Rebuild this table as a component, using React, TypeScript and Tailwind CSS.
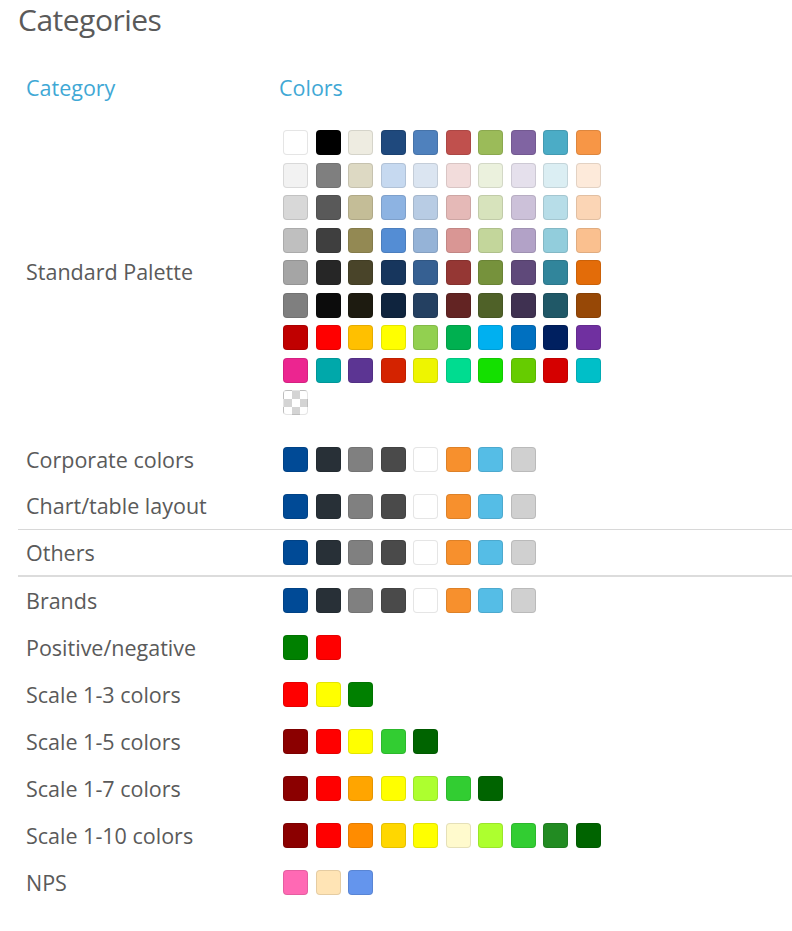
const palette: string[][] = [
  ["#ffffff", "#000000", "#eeece1", "#1f497d", "#4f81bd", "#c0504d", "#9bbb59", "#8064a2", "#4bacc6", "#f79646"],
  ["#f2f2f2", "#7f7f7f", "#ddd9c3", "#c6d9f0", "#dbe5f1", "#f2dcdb", "#ebf1dd", "#e5e0ec", "#dbeef3", "#fdeada"],
  ["#d8d8d8", "#595959", "#c4bd97", "#8db3e2", "#b8cce4", "#e5b9b7", "#d7e3bc", "#ccc1d9", "#b7dde8", "#fbd5b5"],
  ["#bfbfbf", "#3f3f3f", "#938953", "#548dd4", "#95b3d7", "#d99694", "#c3d69b", "#b2a2c7", "#92cddc", "#fac08f"],
  ["#a5a5a5", "#262626", "#494429", "#17365d", "#366092", "#953734", "#76923c", "#5f497a", "#31859b", "#e36c09"],
  ["#7f7f7f", "#0c0c0c", "#1d1b10", "#0f243e", "#244061", "#632423", "#4f6128", "#3f3151", "#205867", "#974806"],
  ["#c00000", "#ff0000", "#ffc000", "#ffff00", "#92d050", "#00b050", "#00b0f0", "#0070c0", "#002060", "#7030a0"],
  ["#ec2590", "#00a8aa", "#5c3593", "#d42300", "#eef500", "#00dc90", "#14e000", "#66cc00", "#d50000", "#00bfc8"],
];

const corporate = ["#004a96", "#283037", "#808080", "#4a4a4a", "#ffffff", "#f7902d", "#55bde6", "#d0d0d0"];

type Row = { label: string; colors: string[]; line?: "thin" | "thick" };

const rows: Row[] = [
  { label: "Corporate colors", colors: corporate },
  { label: "Chart/table layout", colors: corporate, line: "thin" },
  { label: "Others", colors: corporate, line: "thick" },
  { label: "Brands", colors: corporate },
  { label: "Positive/negative", colors: ["#008000", "#ff0000"] },
  { label: "Scale 1-3 colors", colors: ["#ff0000", "#ffff00", "#008000"] },
  { label: "Scale 1-5 colors", colors: ["#8b0000", "#ff0000", "#ffff00", "#32cd32", "#006400"] },
  {
    label: "Scale 1-7 colors",
    colors: ["#8b0000", "#ff0000", "#ffa500", "#ffff00", "#adff2f", "#32cd32", "#006400"],
  },
  {
    label: "Scale 1-10 colors",
    colors: ["#8b0000", "#ff0000", "#ff8c00", "#ffd700", "#ffff00", "#fffacd", "#adff2f", "#32cd32", "#228b22", "#006400"],
  },
  { label: "NPS", colors: ["#ff69b4", "#ffe4b5", "#6495ed"] },
];

function Swatch({ color }: { color: string }) {
  return (
    <div
      className="w-[25px] h-[25px] rounded-[4px] border border-black/10 shrink-0"
      style={{ backgroundColor: color }}
    />
  );
}

export default function App() {
  return (
    <div className="min-h-[931px] bg-white pl-[18px] font-['Open_Sans',sans-serif] text-[#5a5a5a]">
      <h1 className="text-[30px] leading-[40px] font-normal tracking-[-0.5px]">Categories</h1>

      <div className="mt-[24.5px] h-[47px] flex items-center pl-[8px] text-[21.5px] text-[#3fa8d5]">
        <div className="w-[253px]">Category</div>
        <div>Colors</div>
      </div>

      {/* standard palette */}
      <div className="mt-[7.5px] pt-[11px] pb-[21px] flex items-center pl-[8px]">
        <div className="w-[257px] text-[21.5px]">Standard Palette</div>
        <div className="flex flex-col gap-[7.5px]">
          {palette.map((r, i) => (
            <div key={i} className="flex gap-[7.5px]">
              {r.map((c, j) => (
                <Swatch key={j} color={c} />
              ))}
            </div>
          ))}
          <div className="w-[25px] h-[25px] rounded-[4px] border border-black/10 bg-[conic-gradient(#d4d4d4_25%,#fff_0_50%,#d4d4d4_0_75%,#fff_0)] bg-[length:16px_16px]" />
        </div>
      </div>

      {rows.map((row) => (
        <div
          key={row.label}
          className={
            row.line === "thin"
              ? "h-[47px] flex items-center pl-[8px] border-b border-[#d8d8d8]"
              : row.line === "thick"
                ? "h-[47px] flex items-center pl-[8px] border-b-2 border-[#dcdcdc]"
                : "h-[47px] flex items-center pl-[8px]"
          }
        >
          <div className="w-[257px] text-[21.5px] pt-[1px]">{row.label}</div>
          <div className="flex gap-[7.5px]">
            {row.colors.map((c, j) => (
              <Swatch key={j} color={c} />
            ))}
          </div>
        </div>
      ))}
    </div>
  );
}
